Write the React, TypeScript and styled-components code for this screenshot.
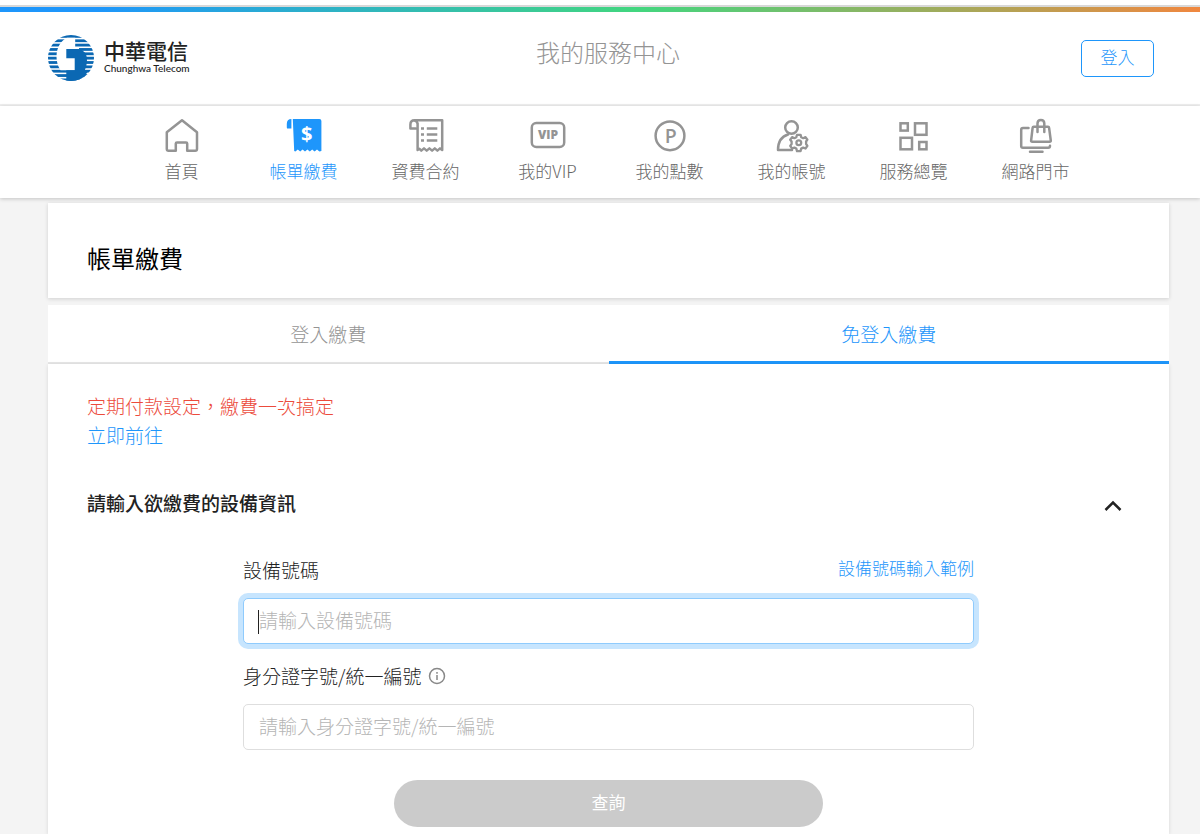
import React, { useState } from 'react';
import styled, { createGlobalStyle } from 'styled-components';

const blue = '#1e96fb';
const grey = '#949494';

const GlobalStyle = createGlobalStyle`
  *, *::before, *::after { box-sizing: border-box; }
  body {
    margin: 0;
    background: #f4f4f4;
    color: #222;
    font-family: 'Noto Sans CJK TC', 'Noto Sans', sans-serif;
    font-weight: 300;
    font-size: 19px;
  }
  button, input { font: inherit; }
  a { color: ${blue}; text-decoration: none; }
  h1, h2, p { margin: 0; }
`;

const Page = styled.div`
  min-height: 100vh;
  display: flex;
  flex-direction: column;
  overflow: hidden;
`;

const TopBar = styled.div`
  height: 12px;
  background:
    linear-gradient(#fff 5px, #d8d8d8 5px, #d8d8d8 7px, transparent 7px),
    linear-gradient(90deg, #1e96fb 0%, #1e96fb 8%, #42d67f 53%, #f0873f 100%);
`;

const Header = styled.header`
  display: grid;
  grid-template-columns: 1fr auto 1fr;
  align-items: center;
  height: 94px;
  padding: 0 46px 0 48px;
  background: #fff;
  border-bottom: 2px solid #efefef;
`;

const Brand = styled.a`
  display: flex;
  align-items: center;
  gap: 10px;
  color: #222;
`;

const BrandText = styled.span`
  display: flex;
  flex-direction: column;
  margin-bottom: 4px;
`;

const BrandName = styled.span`
  font-size: 21px;
  line-height: 24px;
  font-weight: 500;
`;

const BrandLatin = styled.span`
  font-family: Lato, sans-serif;
  font-size: 10px;
  line-height: 12px;
  font-weight: 500;
`;

const SiteTitle = styled.div`
  margin-bottom: 12px;
  padding-left: 14px;
  font-size: 24px;
  line-height: 36px;
  color: ${grey};
`;

const LoginButton = styled.button`
  justify-self: end;
  width: 73px;
  height: 37px;
  padding: 0 0 2px;
  border: 1px solid ${blue};
  border-radius: 5px;
  background: #fff;
  color: ${blue};
  font-size: 17px;
  line-height: 26px;
`;

const Nav = styled.nav`
  position: relative;
  display: flex;
  justify-content: center;
  height: 92px;
  padding: 12px 31px 0 48px;
  background: #fff;
  box-shadow: 0 1px 4px rgba(0, 0, 0, 0.2);
`;

const NavItem = styled.a<{ $active?: boolean }>`
  display: flex;
  flex-direction: column;
  align-items: center;
  width: 122px;
  gap: 4px;
  font-size: 17px;
  line-height: 26px;
  color: ${(p) => (p.$active ? blue : '#666')};

  svg {
    color: ${(p) => (p.$active ? blue : grey)};
  }
`;

const Main = styled.main`
  flex: 1;
  display: flex;
  flex-direction: column;
  padding: 5px 31px 0 48px;
`;

const TitleCard = styled.section`
  height: 95px;
  padding: 37px 39px 0;
  background: #fff;
  box-shadow: 0 1px 4px rgba(0, 0, 0, 0.15);
`;

const PageTitle = styled.h1`
  font-size: 24px;
  line-height: 36px;
  font-weight: 400;
  color: #000;
`;

const Tabs = styled.div`
  display: flex;
  margin-top: 7px;
  background: #fff;
`;

const Tab = styled.button<{ $active?: boolean }>`
  flex: 1;
  height: 59px;
  padding: 0 0 3px;
  border: 0;
  background: #fff;
  box-shadow: ${(p) => (p.$active ? `inset 0 -3px ${blue}` : 'inset 0 -2px #e6e6e6')};
  color: ${(p) => (p.$active ? blue : grey)};
  font-size: 19px;
  line-height: 29px;
`;

const Panel = styled.section`
  flex: 1;
  padding: 27px 39px 7px;
  background: #fff;
  box-shadow: 0 1px 4px rgba(0, 0, 0, 0.12);
`;

const Notice = styled.p`
  line-height: 29px;
  color: #ec4b3c;
`;

const SectionHead = styled.div`
  display: flex;
  align-items: center;
  justify-content: space-between;
  margin-top: 39px;
`;

const SectionTitle = styled.h2`
  font-size: 19px;
  line-height: 29px;
  font-weight: 500;
`;

const Toggle = styled.button`
  display: flex;
  padding: 6px 7px 0;
  border: 0;
  background: none;
  color: #222;
`;

const Form = styled.form`
  display: flex;
  flex-direction: column;
  max-width: 731px;
  margin: 38px auto 0;
`;

const LabelRow = styled.div`
  display: flex;
  align-items: center;
  justify-content: space-between;
  height: 29px;
`;

const Label = styled.label`
  display: flex;
  align-items: center;
  gap: 6px;
  line-height: 29px;
`;

const ExampleLink = styled.a`
  padding-bottom: 4px;
  font-size: 17px;
  line-height: 25px;
`;

const Field = styled.div`
  position: relative;
  margin: 14px 0 17px;
`;

const Caret = styled.span`
  position: absolute;
  left: 15px;
  top: 12px;
  width: 1px;
  height: 24px;
  background: #222;
`;

const Input = styled.input`
  display: block;
  width: 100%;
  height: 46px;
  padding: 0 15px 3px;
  border: 1px solid #dedede;
  border-radius: 5px;
  outline: 0;
  background: #fff;
  color: #222;
  caret-color: transparent;

  &::placeholder {
    color: #b5b5b5;
    opacity: 1;
  }

  &:focus {
    border-color: #8fcbfd;
    box-shadow: 0 0 0 5px #c7e5fe;
  }
`;

const Submit = styled.button`
  align-self: center;
  width: 100%;
  max-width: 429px;
  height: 47px;
  margin-top: 13px;
  padding: 0 0 3px;
  border: 0;
  border-radius: 24px;
  background: #cbcbcb;
  color: #fff;
  font-size: 17px;
  line-height: 26px;
  font-weight: 400;
`;

const Icon = ({ children }: { children: React.ReactNode }) => (
  <svg
    width="40"
    height="36"
    viewBox="0 0 40 36"
    fill="none"
    stroke="currentColor"
    strokeWidth="2.5"
    strokeLinecap="round"
    strokeLinejoin="round"
    aria-hidden="true"
  >
    {children}
  </svg>
);

const iconText = {
  fill: 'currentColor',
  stroke: 'none',
  textAnchor: 'middle' as const,
  fontFamily: "'Open Sans', sans-serif",
  fontWeight: 700,
};

const HomeIcon = () => (
  <Icon>
    <path d="M20 2.3 4.8 14.3V31q0 1.8 1.8 1.8h7.2v-7.2q0-1.2 1.2-1.2h9q1.2 0 1.2 1.2v7.2h8q1.8 0 1.8-1.8V14.3Z" />
  </Icon>
);

const BillIcon = () => (
  <Icon>
    <path
      stroke="none"
      fill="currentColor"
      d="M8.8 1H35.4q2 0 2 2v30l-2 .6-2.4-2-2.4 2-2.4-2-2.4 2-2.4-2-2.4 2-2.4-2-2.4 2-2.4-2-2.4 2-1.2-.6ZM7.4 1v9.6H4q-1.2 0-1.2-1.2V6Q2.8 1 7.4 1Z"
    />
    <text x="22.8" y="23.4" fontSize="20" {...iconText} fill="#fff">$</text>
  </Icon>
);

const ContractIcon = () => (
  <Icon>
    <path d="M9.6 10.5H4.4V6.5Q4.4 2.2 8.6 2.2H36.2V32l-2.2-1.6-2.6 2.2-2.6-2.2-2.7 2.2-2.7-2.2-2.7 2.2-2.7-2.2-2.7 2.2-1.8-1.8-1.9 1.2V5.5Q10.6 2.5 8.1 2.5" />
    <path strokeLinecap="butt" d="M15 10.5h3M20.8 10.5h10.5M15 16.5h3M20.8 16.5h10.5M15 22.5h3M20.8 22.5h10.5" />
  </Icon>
);

const VipIcon = () => (
  <Icon>
    <rect x="3.8" y="5" width="32.4" height="24" rx="4.5" />
    <text x="20" y="21.4" fontSize="12" {...iconText} fontWeight={800}>VIP</text>
  </Icon>
);

const PointsIcon = () => (
  <Icon>
    <circle cx="20" cy="17.8" r="14.4" />
    <text x="20.8" y="24.8" fontSize="19.5" {...iconText} fontWeight={600}>P</text>
  </Icon>
);

const AccountIcon = () => (
  <Icon>
    <circle cx="19.5" cy="9.5" r="6.3" />
    <path d="M20 32H6C6 24 9.5 18.5 16 16.5" />
    <path
      strokeWidth="2.3"
      d="M25 16.8h3.6l.6 2.5 2 .9 2.3-1.1 1.9 2.6-1.3 1.8v2.5l1.3 1.9-1.9 2.6-2.3-.9-2 1-.6 2.5h-3.6l-.7-2.5-1.9-1-2.3.9-1.9-2.6 1.4-1.9v-2.5l-1.4-1.8 1.9-2.6 2.3 1.1 1.9-.9Z"
    />
    <circle cx="26.8" cy="24.8" r="2.4" strokeWidth="2.3" />
  </Icon>
);

const GridIcon = () => (
  <Icon>
    <g strokeLinejoin="miter">
      <rect x="6.5" y="5.3" width="7.3" height="7.3" />
      <rect x="21" y="5.3" width="11.5" height="11.5" />
      <rect x="6.5" y="19.8" width="11.5" height="11.5" />
      <rect x="25.2" y="24" width="7.3" height="7.3" />
    </g>
  </Icon>
);

const ShopIcon = () => (
  <Icon>
    <path d="M12.5 10H7Q5.2 10 5.2 11.8V28q0 1.8 1.8 1.8h25.2q1.8 0 1.8-2M14 33.8h12.5" />
    <path d="M17.7 8.8h14.3q1 0 1.1 1l1.7 12.8q.1 1.2-1.1 1.2H16.2q-1.2 0-1.1-1.2L16.6 9.8q.1-1 1.1-1Z" />
    <path d="M21.5 14V5.5q0-3.5 3.4-3.5t3.4 3.5V14" />
  </Icon>
);

const Logo = () => (
  <svg width="46" height="47" viewBox="0 0 46 47" aria-hidden="true">
    <defs>
      <clipPath id="globe">
        <circle cx="23" cy="23" r="23" />
      </clipPath>
    </defs>
    <g clipPath="url(#globe)">
      {Array.from({ length: 11 }, (_, i) => (
        <rect key={i} x="0" y={i * 4.35} width="46" height="2.8" fill="#0b68b3" />
      ))}
      <path fill="#fff" d="M27.2 2.7V12H31V35.3H12.5Q8.500 29 8.500 22C8.500 11 14 5 19 2.700Z" />
      <path fill="#0b68b3" d="M18.3 14H31Q39 16 39 25q0 6-2.5 11H40L34 46H18.3V35.3h8.4V23.3h-8.4Z" />
    </g>
  </svg>
);

const navItems = [
  { label: '首頁', icon: HomeIcon },
  { label: '帳單繳費', icon: BillIcon, active: true },
  { label: '資費合約', icon: ContractIcon },
  { label: '我的VIP', icon: VipIcon },
  { label: '我的點數', icon: PointsIcon },
  { label: '我的帳號', icon: AccountIcon },
  { label: '服務總覽', icon: GridIcon },
  { label: '網路門市', icon: ShopIcon },
];

export default function App() {
  const [device, setDevice] = useState('');
  const [focused, setFocused] = useState(true);

  return (
    <Page>
      <GlobalStyle />
      <TopBar />
      <Header>
        <Brand href="#">
          <Logo />
          <BrandText>
            <BrandName>中華電信</BrandName>
            <BrandLatin>Chunghwa Telecom</BrandLatin>
          </BrandText>
        </Brand>
        <SiteTitle>我的服務中心</SiteTitle>
        <LoginButton type="button">登入</LoginButton>
      </Header>
      <Nav>
        {navItems.map(({ label, icon: ItemIcon, active }) => (
          <NavItem key={label} href="#" $active={active}>
            <ItemIcon />
            {label}
          </NavItem>
        ))}
      </Nav>
      <Main>
        <TitleCard>
          <PageTitle>帳單繳費</PageTitle>
        </TitleCard>
        <Tabs role="tablist">
          <Tab type="button" role="tab" aria-selected={false}>登入繳費</Tab>
          <Tab type="button" role="tab" aria-selected $active>免登入繳費</Tab>
        </Tabs>
        <Panel>
          <Notice>定期付款設定，繳費一次搞定</Notice>
          <Notice><a href="#">立即前往</a></Notice>
          <SectionHead>
            <SectionTitle>請輸入欲繳費的設備資訊</SectionTitle>
            <Toggle type="button" aria-label="收合" aria-expanded>
              <svg width="20" height="14" viewBox="0 0 20 14" fill="none" stroke="currentColor" strokeWidth="2.5">
                <path d="M2.5 11 10 3.5 17.5 11" />
              </svg>
            </Toggle>
          </SectionHead>
          <Form>
            <LabelRow>
              <Label htmlFor="device">設備號碼</Label>
              <ExampleLink href="#">設備號碼輸入範例</ExampleLink>
            </LabelRow>
            <Field>
              <Input
                id="device"
                autoFocus
                placeholder="請輸入設備號碼"
                value={device}
                onChange={(e) => setDevice(e.target.value)}
                onFocus={() => setFocused(true)}
                onBlur={() => setFocused(false)}
              />
              {focused && !device && <Caret />}
            </Field>
            <LabelRow>
              <Label htmlFor="identity">
                身分證字號/統一編號
                <svg width="18" height="18" viewBox="0 0 18 18" fill="none" stroke="#888" strokeWidth="1.5" aria-hidden="true">
                  <circle cx="9" cy="9" r="7.5" />
                  <path d="M9 8v5M9 5v1.7" />
                </svg>
              </Label>
            </LabelRow>
            <Field>
              <Input id="identity" placeholder="請輸入身分證字號/統一編號" />
            </Field>
            <Submit type="submit">查詢</Submit>
          </Form>
        </Panel>
      </Main>
    </Page>
  );
}
